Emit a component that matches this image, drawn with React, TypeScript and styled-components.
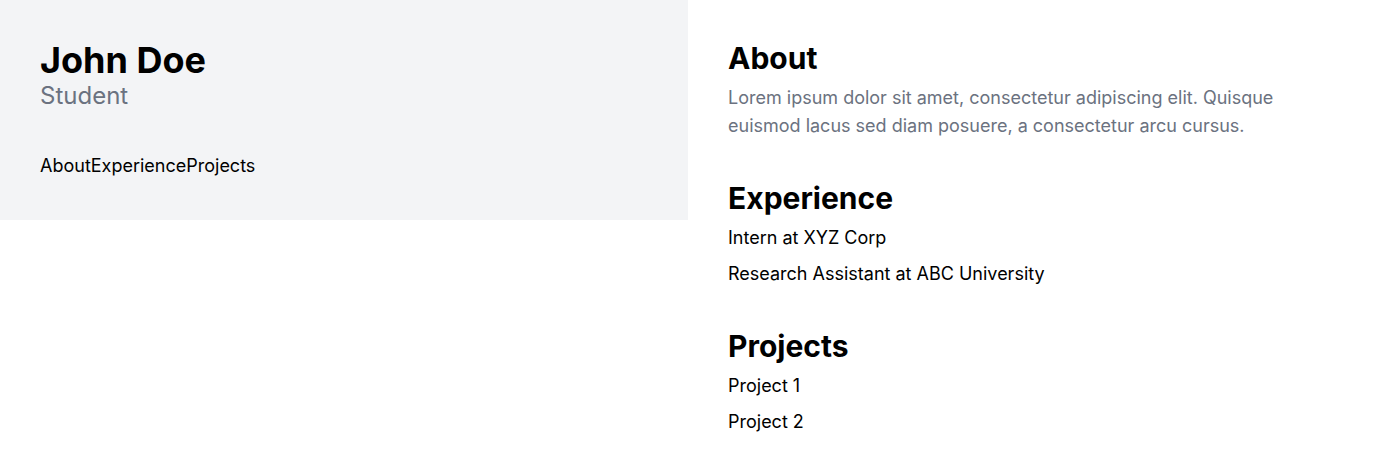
import styled, { createGlobalStyle } from "styled-components";

const GlobalStyle = createGlobalStyle`
  * {
    box-sizing: border-box;
  }
  body {
    margin: 0;
    font-family: Inter, "Liberation Sans", sans-serif;
    color: #000;
    background: #fff;
  }
`;

const Page = styled.div`
  display: flex;
  align-items: flex-start;
  width: 100%;
`;

const Sidebar = styled.aside`
  width: 50%;
  padding: 40px;
  background: #f3f4f6;
`;

const Name = styled.h1`
  margin: 0;
  font-size: 36px;
  line-height: 40px;
  font-weight: 700;
`;

const Role = styled.p`
  margin: 0;
  font-size: 24px;
  line-height: 32px;
  color: #6b7280;
`;

const Nav = styled.nav`
  display: flex;
  margin-top: 40px;
`;

const NavLink = styled.a`
  font-size: 18px;
  line-height: 28px;
  color: #000;
  text-decoration: none;
`;

const Main = styled.main`
  width: 50%;
  padding: 40px;
  display: flex;
  flex-direction: column;
  gap: 40px;
`;

const Section = styled.section`
  display: flex;
  flex-direction: column;
`;

const Heading = styled.h2`
  margin: 0 0 8px;
  font-size: 30px;
  line-height: 36px;
  font-weight: 700;
`;

const Text = styled.p`
  margin: 0;
  font-size: 18px;
  line-height: 28px;
  color: #6b7280;
`;

const List = styled.ul`
  list-style: none;
  margin: 0;
  padding: 0;
  display: flex;
  flex-direction: column;
  gap: 8px;
`;

const Item = styled.li`
  font-size: 18px;
  line-height: 28px;
`;

const sections = [
  { id: "experience", title: "Experience", items: ["Intern at XYZ Corp", "Research Assistant at ABC University"] },
  { id: "projects", title: "Projects", items: ["Project 1", "Project 2"] },
];

export default function App() {
  return (
    <>
      <GlobalStyle />
      <Page>
        <Sidebar>
          <Name>John Doe</Name>
          <Role>Student</Role>
          <Nav>
            <NavLink href="#about">About</NavLink>
            <NavLink href="#experience">Experience</NavLink>
            <NavLink href="#projects">Projects</NavLink>
          </Nav>
        </Sidebar>
        <Main>
          <Section id="about">
            <Heading>About</Heading>
            <Text>
              Lorem ipsum dolor sit amet, consectetur adipiscing elit. Quisque
              euismod lacus sed diam posuere, a consectetur arcu cursus.
            </Text>
          </Section>
          {sections.map((s) => (
            <Section key={s.id} id={s.id}>
              <Heading>{s.title}</Heading>
              <List>
                {s.items.map((it) => (
                  <Item key={it}>{it}</Item>
                ))}
              </List>
            </Section>
          ))}
        </Main>
      </Page>
    </>
  );
}
